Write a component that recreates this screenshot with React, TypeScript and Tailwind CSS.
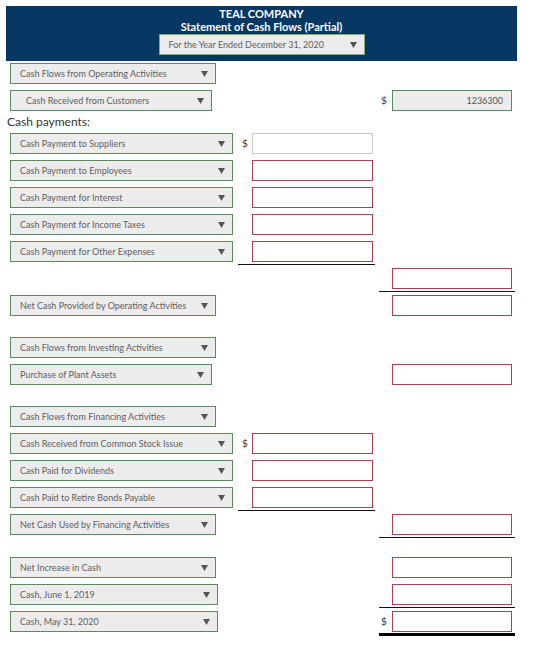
import React from "react";

type Cell = {
  dollar?: boolean;
  tone: "red" | "gray" | "filled";
  value?: string;
  rule?: "single" | "double";
};

type Line = {
  gap: string;
  label?: string;
  width?: string;
  indent?: string;
  mid?: Cell;
  right?: Cell;
};

const lines: Line[] = [
  { gap: "mt-[2px]", label: "Cash Flows from Operating Activities", width: "w-[206px]" },
  {
    gap: "mt-[6px]",
    label: "Cash Received from Customers",
    width: "w-[202px]",
    indent: "pl-[15px]",
    right: { dollar: true, tone: "filled", value: "1236300" },
  },
  { gap: "mt-0", label: "Cash Payment to Suppliers", width: "w-[223px]", mid: { dollar: true, tone: "gray" } },
  { gap: "mt-[6px]", label: "Cash Payment to Employees", width: "w-[223px]", mid: { tone: "red" } },
  { gap: "mt-[6px]", label: "Cash Payment for Interest", width: "w-[223px]", mid: { tone: "red" } },
  { gap: "mt-[6px]", label: "Cash Payment for Income Taxes", width: "w-[223px]", mid: { tone: "red" } },
  { gap: "mt-[6px]", label: "Cash Payment for Other Expenses", width: "w-[223px]", mid: { tone: "red", rule: "single" } },
  { gap: "mt-[6px]", right: { tone: "red", rule: "single" } },
  { gap: "mt-[6px]", label: "Net Cash Provided by Operating Activities", width: "w-[206px]", right: { tone: "red" } },
  { gap: "mt-[21px]", label: "Cash Flows from Investing Activities", width: "w-[206px]" },
  { gap: "mt-[6px]", label: "Purchase of Plant Assets", width: "w-[202px]", right: { tone: "red" } },
  { gap: "mt-[21px]", label: "Cash Flows from Financing Activities", width: "w-[206px]" },
  { gap: "mt-[6px]", label: "Cash Received from Common Stock Issue", width: "w-[223px]", mid: { dollar: true, tone: "red" } },
  { gap: "mt-[6px]", label: "Cash Paid for Dividends", width: "w-[223px]", mid: { tone: "red" } },
  { gap: "mt-[6px]", label: "Cash Paid to Retire Bonds Payable", width: "w-[223px]", mid: { tone: "red", rule: "single" } },
  { gap: "mt-[6px]", label: "Net Cash Used by Financing Activities", width: "w-[206px]", right: { tone: "red", rule: "single" } },
  { gap: "mt-[22px]", label: "Net Increase in Cash", width: "w-[206px]", right: { tone: "red" } },
  { gap: "mt-[6px]", label: "Cash, June 1, 2019", width: "w-[208px]", right: { tone: "red", rule: "single" } },
  { gap: "mt-[6px]", label: "Cash, May 31, 2020", width: "w-[208px]", right: { dollar: true, tone: "red", rule: "double" } },
];

const Caret = () => (
  <svg width="7" height="6" viewBox="0 0 7 6" className="shrink-0">
    <path d="M0 0h7L3.5 6z" fill="#555" />
  </svg>
);

const Select = ({ label, width, indent }: { label: string; width: string; indent?: string }) => (
  <div
    className={`flex h-[21px] items-center justify-between border border-[#5d8a5d] bg-[#ececec] pr-[7px] ${width} ${indent ?? "pl-[9px]"}`}
  >
    <span className="whitespace-nowrap text-[9px] text-[#606060]">{label}</span>
    <Caret />
  </div>
);

const Box = ({ tone, value, width }: { tone: Cell["tone"]; value?: string; width: string }) => {
  const look =
    tone === "red"
      ? "border-[#a8434f] bg-white"
      : tone === "gray"
      ? "border-[#c9c9c9] bg-white"
      : "border-[#5d8a5d] bg-[#ececec]";
  return (
    <div className={`flex h-[21px] items-center justify-end border pr-[8px] text-[9px] text-[#555] ${width} ${look}`}>
      {value}
    </div>
  );
};

const ruleClass = (rule?: Cell["rule"]) =>
  rule === "single" ? "h-[24px] border-b border-[#111]" : rule === "double" ? "h-[25px] border-b-[3px] border-black" : "";

export default function App() {
  return (
    <div className="min-h-[649px] w-[535px] bg-white pt-[6px] font-['Lato',sans-serif]">
      {/* title block */}
      <div className="mx-[6px] flex w-[511px] flex-col items-center bg-[#073763] pb-[6px] pt-[1px] text-white">
        <div className="text-[11px] font-bold leading-[13px]">TEAL COMPANY</div>
        <div className="text-[11px] font-bold leading-[13px]">Statement of Cash Flows (Partial)</div>
        <div className="mt-[1px] flex h-[21px] w-[206px] items-center justify-between border border-[#8aa58a] bg-[#ececec] pl-[9px] pr-[7px]">
          <span className="text-[9px] text-[#606060]">For the Year Ended December 31, 2020</span>
          <Caret />
        </div>
      </div>

      {lines.map((line, i) => (
        <React.Fragment key={i}>
          <div className={`flex h-[21px] items-start pl-[10px] ${line.gap}`}>
            <div className="w-[228px] shrink-0">
              {line.label && <Select label={line.label} width={line.width ?? ""} indent={line.indent} />}
            </div>
            <div className={`flex w-[137px] shrink-0 items-start ${line.mid ? ruleClass(line.mid.rule) : ""}`}>
              {line.mid && (
                <>
                  <span className="flex h-[21px] w-[14px] items-center pl-[4px] text-[10px] text-[#333]">
                    {line.mid.dollar ? "$" : ""}
                  </span>
                  <Box tone={line.mid.tone} width="w-[121px]" />
                </>
              )}
            </div>
            <div className={`ml-[4px] flex w-[136px] shrink-0 items-start ${line.right ? ruleClass(line.right.rule) : ""}`}>
              {line.right && (
                <>
                  <span className="flex h-[21px] w-[13px] items-center pl-[2px] text-[10px] text-[#333]">
                    {line.right.dollar ? "$" : ""}
                  </span>
                  <Box tone={line.right.tone} value={line.right.value} width="w-[120px]" />
                </>
              )}
            </div>
          </div>
          {i === 1 && (
            <div className="flex h-[22px] items-center pl-[7px] text-[12px] text-[#333]">Cash payments:</div>
          )}
        </React.Fragment>
      ))}
    </div>
  );
}
